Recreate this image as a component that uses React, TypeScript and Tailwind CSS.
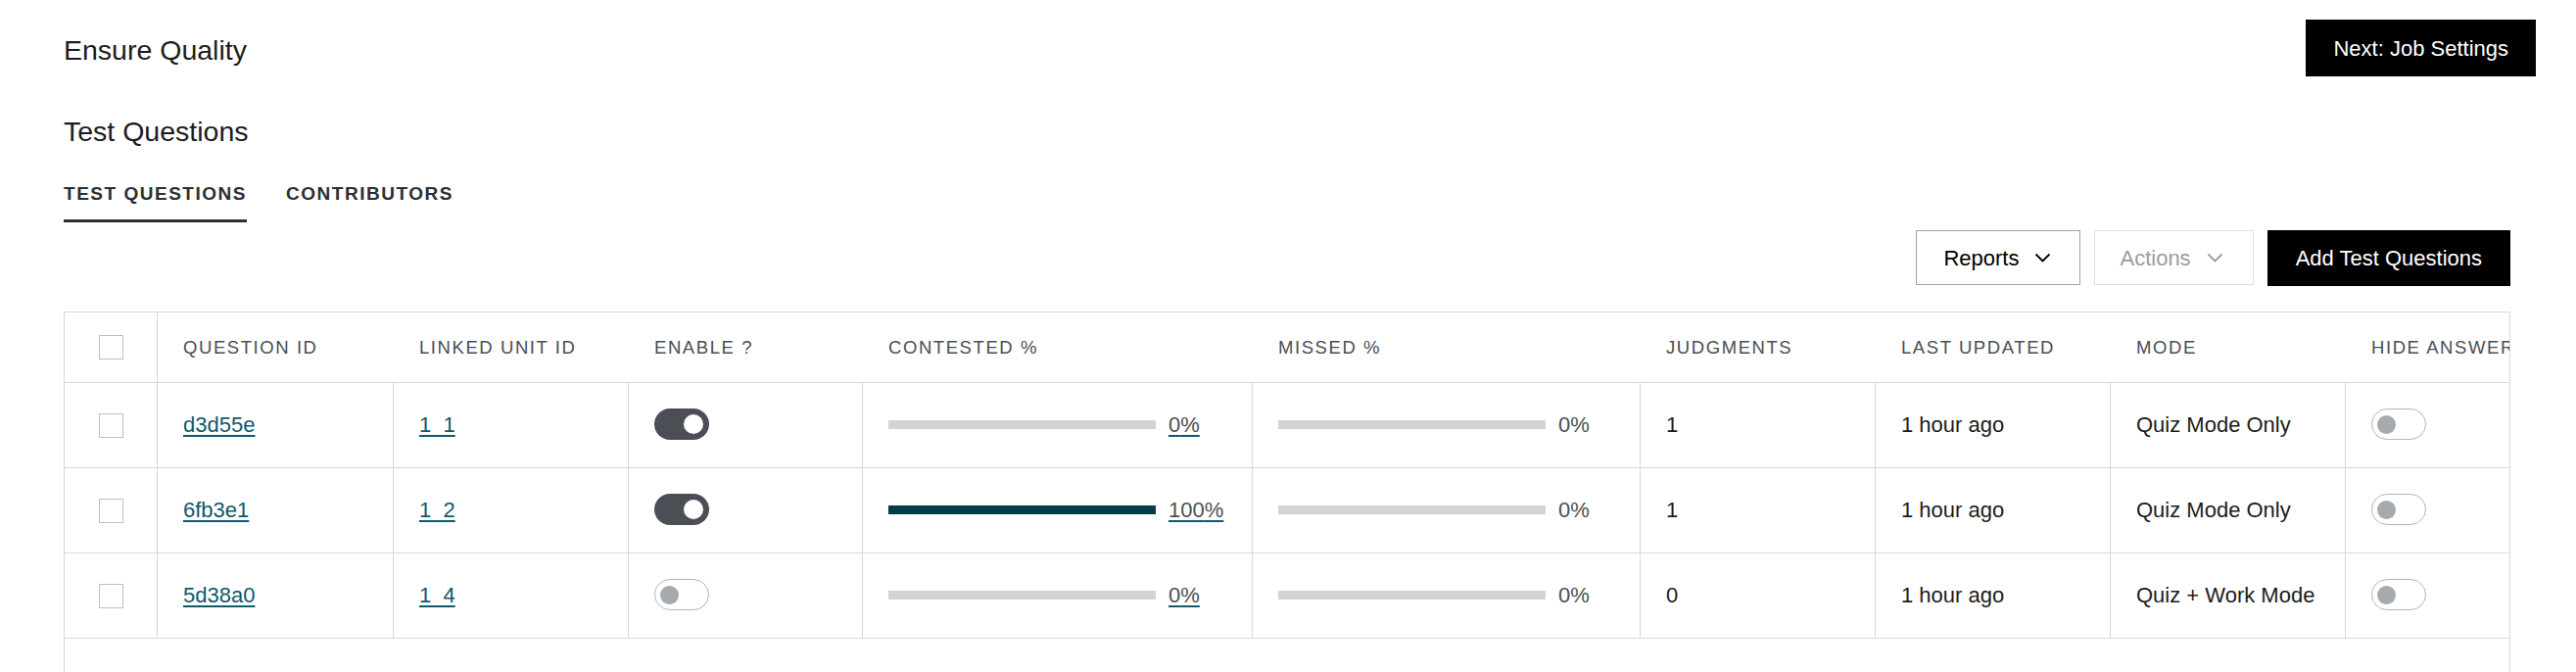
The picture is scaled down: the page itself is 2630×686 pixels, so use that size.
import type { ReactNode } from 'react';

type TestQuestion = {
  id: string;
  unitId: string;
  enabled: boolean;
  contested: number;
  missed: number;
  judgments: number;
  updated: string;
  mode: string;
  hideAnswer: boolean;
};

const questions: TestQuestion[] = [
  { id: 'd3d55e', unitId: '1_1', enabled: true, contested: 0, missed: 0, judgments: 1, updated: '1 hour ago', mode: 'Quiz Mode Only', hideAnswer: false },
  { id: '6fb3e1', unitId: '1_2', enabled: true, contested: 100, missed: 0, judgments: 1, updated: '1 hour ago', mode: 'Quiz Mode Only', hideAnswer: false },
  { id: '5d38a0', unitId: '1_4', enabled: false, contested: 0, missed: 0, judgments: 0, updated: '1 hour ago', mode: 'Quiz + Work Mode', hideAnswer: false },
];

const headers = [
  'Question ID',
  'Linked Unit ID',
  'Enable ?',
  'Contested %',
  'Missed %',
  'Judgments',
  'Last Updated',
  'Mode',
  'Hide Answer',
];

export default function App() {
  return (
    <div className="h-[686px] w-full overflow-hidden bg-white font-['Liberation_Sans',Arial,sans-serif] text-[#1c1c1c]">
      <header className="flex items-start justify-between pl-[65px] pr-[41px] pt-[20px]">
        <h1 className="mt-[14px] text-[28.5px] leading-[34px]">Ensure Quality</h1>
        <button type="button" className="h-[58px] bg-black px-[28px] text-[22px] text-white">
          Next: Job Settings
        </button>
      </header>

      <main className="pl-[65px] pr-[67px]">
        <h2 className="mt-[39px] text-[28.5px] leading-[34px]">Test Questions</h2>

        <nav className="mt-[35px] flex gap-[40px]">
          <Tab active>Test Questions</Tab>
          <Tab>Contributors</Tab>
        </nav>

        <div className="mt-[8px] flex items-start justify-end gap-[14px]">
          <button
            type="button"
            className="flex h-[56px] items-center gap-[16px] border border-[#a0a4a8] pl-[27px] pr-[29px] text-[22px] text-black"
          >
            Reports
            <Chevron />
          </button>
          <button
            type="button"
            disabled
            className="flex h-[56px] items-center gap-[16px] border border-[#dedede] pl-[25px] pr-[30px] text-[22px] text-[#9c9c9c]"
          >
            Actions
            <Chevron />
          </button>
          <button type="button" className="h-[57px] bg-black px-[29px] text-[22px] text-white">
            Add Test Questions
          </button>
        </div>

        <div className="mt-[26px] h-[400px] overflow-hidden border border-[#d8d8d8] bg-white">
          <div className="grid w-max grid-cols-[95px_241px_240px_239px_398px_396px_240px_240px_240px_240px]">
            <div className="flex h-[72px] items-center justify-center border-b border-r border-[#d8d8d8]">
              <Checkbox />
            </div>
            {headers.map((h) => (
              <div
                key={h}
                className="flex h-[72px] items-center whitespace-nowrap border-b border-[#d8d8d8] pl-[26px] text-[18.5px] uppercase tracking-[0.085em] text-[#4a4e53]"
              >
                {h}
              </div>
            ))}

            {questions.map((q) => (
              <Row key={q.id} q={q} />
            ))}
          </div>
        </div>
      </main>
    </div>
  );
}

function Row({ q }: { q: TestQuestion }) {
  return (
    <>
      <div className="flex h-[87px] items-center justify-center border-b border-r border-[#d8d8d8]">
        <Checkbox />
      </div>
      <Cell>
        <a href="#" className="text-[#0e5a6c] underline decoration-[#0e5a6c] decoration-2 underline-offset-[3px]">
          {q.id}
        </a>
      </Cell>
      <Cell>
        <a href="#" className="text-[#0e5a6c] underline decoration-[#0e5a6c] decoration-2 underline-offset-[3px]">
          {q.unitId}
        </a>
      </Cell>
      <Cell>
        <Toggle on={q.enabled} />
      </Cell>
      <Cell>
        <Bar pct={q.contested} />
        <a
          href="#"
          className="ml-[13px] text-[#4b4f54] underline decoration-[#0e5a6c] decoration-2 underline-offset-[3px]"
        >
          {q.contested}%
        </a>
      </Cell>
      <Cell>
        <Bar pct={q.missed} />
        <span className="ml-[13px] text-[#4b4f54]">{q.missed}%</span>
      </Cell>
      <Cell>{q.judgments}</Cell>
      <Cell>{q.updated}</Cell>
      <Cell>{q.mode}</Cell>
      <Cell>
        <Toggle on={q.hideAnswer} />
      </Cell>
    </>
  );
}

function Cell({ children }: { children: ReactNode }) {
  return (
    <div className="flex h-[87px] items-center whitespace-nowrap border-b border-r border-[#d8d8d8] pb-[2px] pl-[26px] text-[22px]">
      {children}
    </div>
  );
}

function Tab({ active, children }: { active?: boolean; children: ReactNode }) {
  return (
    <div
      className={
        active
          ? 'border-b-[3px] border-[#2c2f33] pb-[14px] text-[19px] font-bold uppercase leading-[24px] tracking-[0.08em] text-[#2c2f33]'
          : 'border-b-[3px] border-transparent pb-[14px] text-[19px] font-bold uppercase leading-[24px] tracking-[0.08em] text-[#2c2f33]'
      }
    >
      {children}
    </div>
  );
}

function Checkbox() {
  return <span className="block h-[25px] w-[25px] border-[1.5px] border-[#bcbfc2] bg-white" />;
}

function Toggle({ on }: { on: boolean }) {
  if (on) {
    return (
      <span className="flex h-[32px] w-[56px] items-center justify-end rounded-full bg-[#4b4e55] pr-[6px]">
        <span className="h-[20px] w-[20px] rounded-full bg-white" />
      </span>
    );
  }
  return (
    <span className="flex h-[32px] w-[56px] items-center rounded-full border border-[#b4b7ba] bg-white pl-[5px]">
      <span className="h-[19px] w-[19px] rounded-full bg-[#a4aaad]" />
    </span>
  );
}

function Bar({ pct }: { pct: number }) {
  return (
    <span className="block h-[9px] w-[273px] bg-[#d1d3d5]">
      <span className="block h-full bg-[#033c48]" style={{ width: `${pct}%` }} />
    </span>
  );
}

function Chevron() {
  return (
    <svg width="17" height="10" viewBox="0 0 17 10" fill="none">
      <path d="M1.5 1.5 8.5 8.5 15.5 1.5" stroke="currentColor" strokeWidth="1.8" />
    </svg>
  );
}
